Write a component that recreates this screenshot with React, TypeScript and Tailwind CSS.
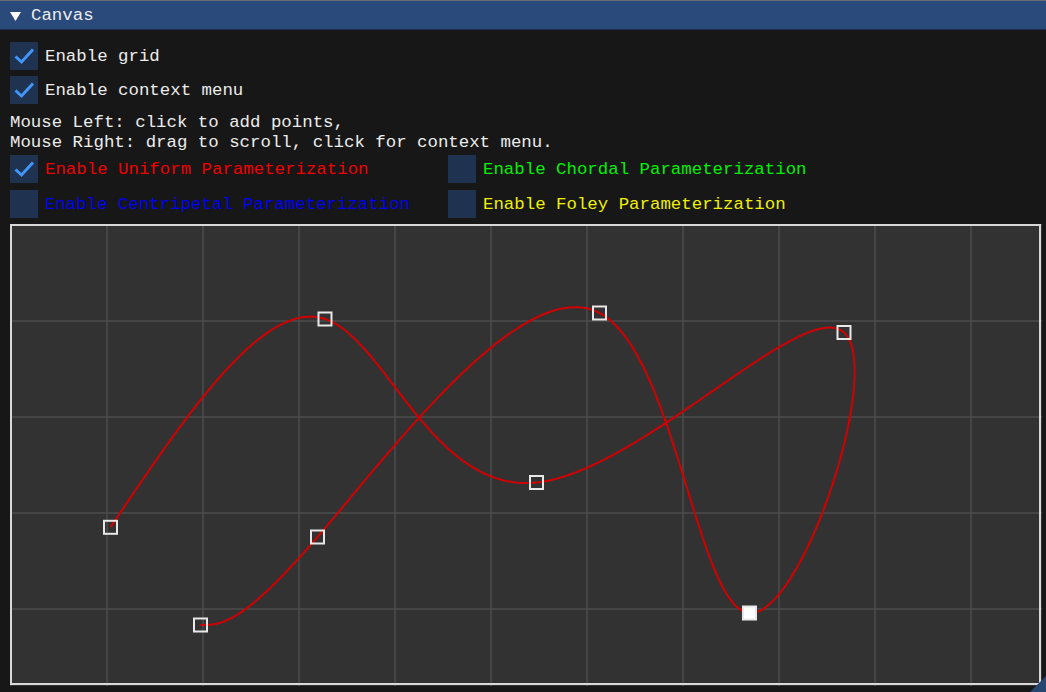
import React from "react";

const PTS: [number, number][] = [
  [110.5, 527.3],
  [325, 319],
  [536.5, 482.5],
  [844, 332.5],
  [749.5, 613],
  [599.5, 313],
  [317.5, 537],
  [200.5, 625],
];

function naturalM(v: number[]): number[] {
  const n = v.length;
  const M = new Array(n).fill(0);
  const a: number[] = [];
  const b: number[] = [];
  const c: number[] = [];
  const d: number[] = [];
  for (let i = 1; i < n - 1; i++) {
    a.push(1);
    b.push(4);
    c.push(1);
    d.push(6 * (v[i + 1] - 2 * v[i] + v[i - 1]));
  }
  const m = d.length;
  for (let i = 1; i < m; i++) {
    const w = a[i] / b[i - 1];
    b[i] -= w * c[i - 1];
    d[i] -= w * d[i - 1];
  }
  const x = new Array(m).fill(0);
  x[m - 1] = d[m - 1] / b[m - 1];
  for (let i = m - 2; i >= 0; i--) x[i] = (d[i] - c[i] * x[i + 1]) / b[i];
  for (let i = 0; i < m; i++) M[i + 1] = x[i];
  return M;
}

function splinePath(): string {
  const xs = PTS.map((p) => p[0]);
  const ys = PTS.map((p) => p[1]);
  const Mx = naturalM(xs);
  const My = naturalM(ys);
  const out: string[] = [];
  const ev = (v: number[], M: number[], i: number, u: number) => {
    const A = 1 - u;
    const B = u;
    return A * v[i] + B * v[i + 1] + ((A * A * A - A) * M[i] + (B * B * B - B) * M[i + 1]) / 6;
  };
  for (let i = 0; i < PTS.length - 1; i++) {
    for (let s = 0; s <= 100; s++) {
      const u = s / 100;
      const x = ev(xs, Mx, i, u);
      const y = ev(ys, My, i, u);
      out.push(`${out.length === 0 ? "M" : "L"}${x.toFixed(2)} ${y.toFixed(2)}`);
    }
  }
  return out.join(" ");
}

function Check() {
  return (
    <svg width="28" height="28" viewBox="0 0 28 28" className="block">
      <path
        d="M5.5 14.5 L11.5 20 L23 7.5"
        fill="none"
        stroke="#4296fa"
        strokeWidth="3"
        strokeLinecap="butt"
        strokeLinejoin="miter"
      />
    </svg>
  );
}

function CheckRow({
  checked,
  label,
  color,
}: {
  checked: boolean;
  label: string;
  color: string;
}) {
  return (
    <div className="flex items-center gap-[7px] h-[28px]">
      <div className="w-[28px] h-[28px] bg-[#1f3250] shrink-0">{checked ? <Check /> : null}</div>
      <span className={`${color} leading-[28px] whitespace-pre pt-[2px]`}>{label}</span>
    </div>
  );
}

export default function App() {
  const vlines: number[] = [];
  for (let x = 11; x < 1042; x += 96) vlines.push(x);
  const hlines: number[] = [];
  for (let y = 225; y < 686; y += 96) hlines.push(y);
  const sp = splinePath();
  return (
    <div
      className="relative w-[1046px] h-[692px] bg-[#171717] overflow-hidden text-[17.4px] text-[#ececec]"
      style={{ fontFamily: '"Liberation Mono", "DejaVu Sans Mono", monospace' }}
    >
      <div className="border-t border-[#6b6b78] bg-[#294a7a] h-[30px] border-b border-b-[#1c2f4c] flex items-center">
        <svg width="30" height="28" viewBox="0 0 30 28" className="block shrink-0">
          <polygon points="10,11 21,11 15.5,20" fill="#ffffff" />
        </svg>
        <span className="leading-[28px] ml-[1px] pt-[2px]">Canvas</span>
      </div>
      <div className="pl-[10px] pt-[12px] flex flex-col">
        <CheckRow checked label="Enable grid" color="text-[#ececec]" />
        <div className="mt-[6px]">
          <CheckRow checked label="Enable context menu" color="text-[#ececec]" />
        </div>
        <div className="mt-[8px] leading-[19.5px] whitespace-pre pt-[1px]">
          <div>Mouse Left: click to add points,</div>
          <div>Mouse Right: drag to scroll, click for context menu.</div>
        </div>
        <div className="mt-[3px] grid grid-cols-[438px_auto] gap-y-[7px]">
          <CheckRow checked label="Enable Uniform Parameterization" color="text-[#f00000]" />
          <CheckRow checked={false} label="Enable Chordal Parameterization" color="text-[#00f000]" />
          <CheckRow checked={false} label="Enable Centripetal Parameterization" color="text-[#0000f0]" />
          <CheckRow checked={false} label="Enable Foley Parameterization" color="text-[#f0f000]" />
        </div>
        <div className="mt-[6px] w-[1032px] h-[462px]">
          <svg width="1032" height="462" viewBox="10 224 1032 462" className="block">
            <rect x="10" y="224" width="1032" height="462" fill="#323232" />
            {vlines.map((x) => (
              <line key={"v" + x} x1={x} y1={224} x2={x} y2={686} stroke="#4c4c4c" strokeWidth="1.5" />
            ))}
            {hlines.map((y) => (
              <line key={"h" + y} x1={10} y1={y} x2={1042} y2={y} stroke="#4c4c4c" strokeWidth="1.5" />
            ))}
            <rect x="11" y="225" width="1029" height="459" fill="none" stroke="#d8d8d8" strokeWidth="2" />
            <path d={sp} fill="none" stroke="#d20000" strokeWidth="2" strokeLinejoin="round" />
            {PTS.map(([x, y], i) => (
              <rect
                key={i}
                x={x - 6.5}
                y={y - 6.5}
                width="13"
                height="13"
                fill={i === 4 ? "#ffffff" : "none"}
                stroke="#e8e8e8"
                strokeWidth="2"
              />
            ))}
          </svg>
        </div>
      </div>
      <svg width="16" height="16" viewBox="0 0 16 16" className="absolute right-0 bottom-0 block">
        <polygon points="16,0 16,16 0,16" fill="#27466f" />
      </svg>
    </div>
  );
}
